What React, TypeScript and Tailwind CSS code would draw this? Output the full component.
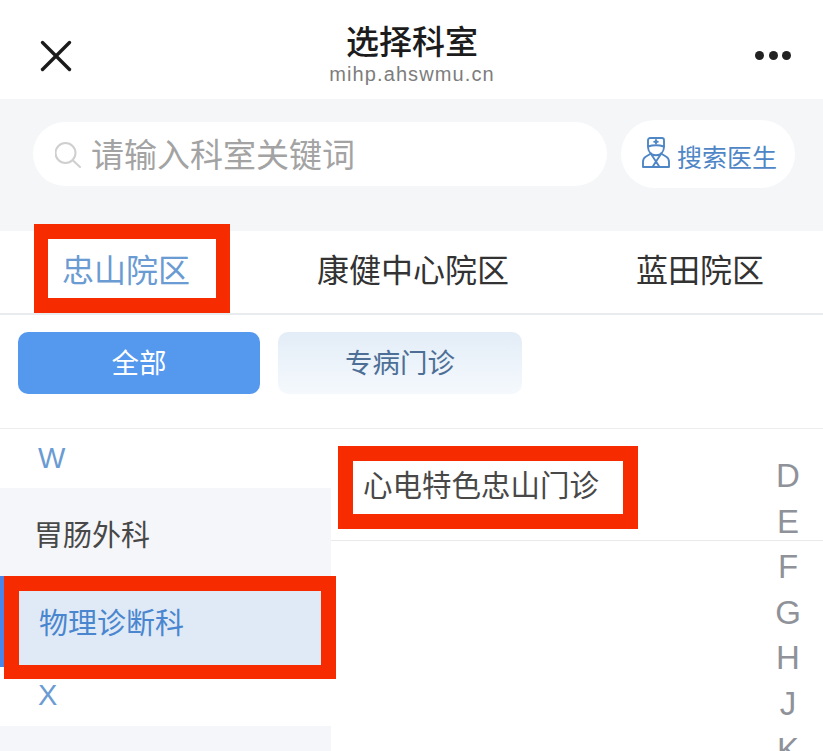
import { X } from "lucide-react";

const cjk = "font-['Noto_Sans_CJK_SC','Liberation_Sans',sans-serif]";

function DoctorIcon() {
  return (
    <svg className="-mt-[4px] shrink-0" width="28" height="31" viewBox="0 0 28 31" fill="none" stroke="#4f86c6" strokeWidth="1.900" strokeLinejoin="round" strokeLinecap="round">
      {/* cap */}
      <path d="M6 9.500V3.200C6 2 7 1 8.200 1h11.600C21 1 22 2 22 3.200v6.300c-5-1.600-11-1.600-16 0z" />
      <path d="M14 3v3.600M12.200 4.800h3.600" />
      {/* face */}
      <path d="M6 9.500c0 5.400 3.200 8.800 8 8.800s8-3.400 8-8.800" />
      {/* coat */}
      <path d="M9 16.500l-5.300 3.200C2 20.700 1 22.700 1 24.800V30h26v-5.200c0-2.100-1-4.100-2.700-5.100L19 16.500" />
      <path d="M9 17l5 7.500 5-7.500" />
      <path d="M10.500 30l3.500-5.500 3.500 5.500" />
    </svg>
  );
}

function RedFrame({ className }: { className: string }) {
  return <div className={`absolute border-[#f62b00] pointer-events-none ${className}`} />;
}

const letters = ["D", "E", "F", "G", "H", "J", "K"];

export default function App() {
  return (
    <div className={`relative h-[751px] w-[823px] overflow-hidden bg-white ${cjk}`}>
      {/* Title bar */}
      <header className="flex h-[99px] items-center pl-[33px] pr-[32px]">
        <div className="flex-1">
          <X className="mt-[12px] -ml-[4px] h-[54px] w-[54px] text-[#1a1a1a]" strokeWidth={1.500} />
        </div>
        <div className="mt-[4px] flex flex-col items-center">
          <h1 className="text-[33px] leading-[44px] font-medium text-[#1c1c1c]">选择科室</h1>
          <p className="font-['Liberation_Sans',sans-serif] text-[20px] leading-[24px] tracking-[1.100px] text-[#7d7d7d]">mihp.ahswmu.cn</p>
        </div>
        <div className="flex flex-1 justify-end">
          <div className="mt-[12px] flex w-[36px] gap-[4.500px]">
            <span className="h-[9px] w-[9px] rounded-full bg-[#222]" />
            <span className="h-[9px] w-[9px] rounded-full bg-[#222]" />
            <span className="h-[9px] w-[9px] rounded-full bg-[#222]" />
          </div>
        </div>
      </header>

      {/* Search */}
      <section className="flex h-[132px] items-start gap-[14px] bg-[#f4f6f8] pt-[21px] pl-[33px]">
        <div className="mt-[2px] flex h-[64px] w-[574px] items-center rounded-full bg-white pl-[22px]">
          <svg width="28" height="30" viewBox="0 0 28 30" fill="none" stroke="#cfcfcf" strokeWidth="2" strokeLinecap="round">
            <circle cx="10.500" cy="14" r="10" />
            <path d="M18 21.500l7 6.500" />
          </svg>
          <span className="ml-[8px] pb-[2px] text-[33px] leading-none text-[#a3a3a3]">请输入科室关键词</span>
        </div>
        <button className="flex h-[68px] w-[174px] items-center rounded-full bg-white pl-[21px]">
          <DoctorIcon />
          <span className="ml-[7px] mt-[5px] text-[25px] leading-none whitespace-nowrap text-[#4f86c6]">搜索医生</span>
        </button>
      </section>

      {/* Campus tabs */}
      <nav className="flex h-[84px] items-center gap-[127px] border-b-2 border-[#e9ecef] pb-[8px] pl-[62px] text-[32px] leading-none whitespace-nowrap text-[#333]">
        <span className="text-[#6a9bd2]">忠山院区</span>
        <span>康健中心院区</span>
        <span>蓝田院区</span>
      </nav>

      {/* Filters */}
      <div className="flex h-[114px] gap-[18px] border-b border-[#eceef0] pt-[17px] pl-[18px] text-[27.500px] leading-none">
        <button className="flex h-[62px] w-[242px] items-center justify-center rounded-[10px] bg-[#5599ee] pb-[2px] text-white">全部</button>
        <button className="flex h-[62px] w-[244px] items-center justify-center rounded-[10px] bg-gradient-to-b from-[#e3edf7] to-[#f5f9fd] pb-[2px] text-[#4d6f96]">专病门诊</button>
      </div>

      {/* Department list */}
      <div className="flex">
        <aside className="w-[331px] text-[29px] leading-none">
          <div className="flex h-[59px] items-center pl-[38px] font-['Liberation_Sans',sans-serif] text-[#6a9bd2]">W</div>
          <div className="flex h-[88px] items-center bg-[#f5f6fa] pt-[3px] pl-[34px] text-[#484848]">胃肠外科</div>
          <div className="flex h-[91px] items-center border-l-[4px] border-[#4a86e8] bg-[#e0eaf6] pl-[35px] text-[#4a86cf]">物理诊断科</div>
          <div className="flex h-[59px] items-center pb-[2px] pl-[38px] font-['Liberation_Sans',sans-serif] text-[#6a9bd2]">X</div>
          <div className="h-[40px] bg-[#f5f6fa]" />
        </aside>
        <main className="flex-1">
          <div className="flex h-[112px] items-center border-b border-[#e9e9e9] pb-[1px] pl-[32px] text-[29.500px] leading-none text-[#484848]">
            心电特色忠山门诊
          </div>
        </main>
      </div>

      {/* Alphabet index */}
      <div className="absolute top-[453px] left-[770px] flex w-[36px] flex-col items-center font-['Liberation_Sans',sans-serif] text-[33px] leading-[45.600px] text-[#8f9299]">
        {letters.map((l) => (
          <span key={l}>{l}</span>
        ))}
      </div>

      {/* Red annotation frames */}
      <RedFrame className="top-[224px] left-[34px] h-[89px] w-[196px] border-x-[14px] border-y-[15px]" />
      <RedFrame className="top-[446px] left-[338px] h-[83px] w-[300px] border-[15px]" />
      <RedFrame className="top-[576px] left-[4px] h-[103px] w-[332px] border-x-[15px] border-t-[15px] border-b-[14px]" />
    </div>
  );
}
